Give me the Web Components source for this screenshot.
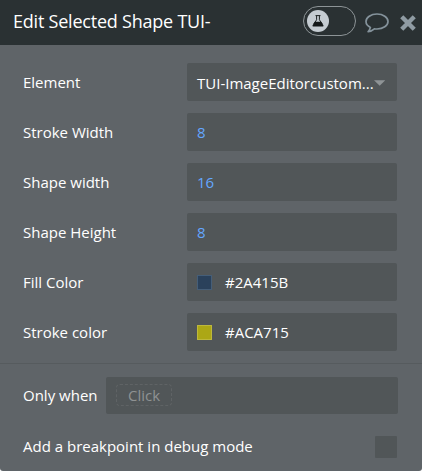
<!DOCTYPE html>
<html lang="en">
<head>
<meta charset="utf-8">
<title>Edit Selected Shape TUI-</title>
<style>
    body {
        margin: 0;
        background: #fff;
        font-family: "Open Sans", "Noto Sans", sans-serif;
        font-size: 15px;
        color: #fff;
    }
</style>
</head>
<body>
<property-editor>
    <editor-header slot="header">Edit Selected Shape TUI-</editor-header>
    <property-row label="Element"><select-field>TUI-ImageEditorcustom...</select-field></property-row>
    <property-row label="Stroke Width"><number-field>8</number-field></property-row>
    <property-row label="Shape width"><number-field>16</number-field></property-row>
    <property-row label="Shape Height"><number-field>8</number-field></property-row>
    <property-row label="Fill Color"><color-field value="#2A415B" edge="#455e78"></color-field></property-row>
    <property-row label="Stroke color"><color-field value="#ACA715" edge="#bdb83c"></color-field></property-row>
    <condition-row slot="footer" label="Only when">Click</condition-row>
    <check-row slot="footer">Add a breakpoint in debug mode</check-row>
</property-editor>

<script>
class PropertyEditor extends HTMLElement {
    constructor() {
        super();
        this.attachShadow({ mode: 'open' });
        this.shadowRoot.innerHTML = `
            <style>
                :host {
                    display: flex;
                    flex-direction: column;
                    box-sizing: border-box;
                    width: 422px;
                    height: 471px;
                    background: #5f6468;
                    border-radius: 0 0 3px 3px;
                    overflow: hidden;
                }

                .rows {
                    display: flex;
                    flex-direction: column;
                    gap: 12px;
                    padding: 18px 25px 12px 23px;
                }

                .footer {
                    display: flex;
                    flex-direction: column;
                    gap: 22px;
                    padding: 13px 24px 0 23px;
                    border-top: 1px solid #565b5e;
                }
            </style>
            <slot name="header"></slot>
            <div class="rows"><slot></slot></div>
            <div class="footer"><slot name="footer"></slot></div>
        `;
    }
}

class EditorHeader extends HTMLElement {
    constructor() {
        super();
        this.attachShadow({ mode: 'open' });
        this.shadowRoot.innerHTML = `
            <style>
                :host {
                    display: flex;
                    align-items: center;
                    box-sizing: border-box;
                    height: 45px;
                    padding: 0 6px 3px 13px;
                    background: #2a3133;
                    font-size: 18px;
                }

                .title {
                    flex: 1;
                    white-space: nowrap;
                    letter-spacing: -0.22px;
                }

                .toggle {
                    display: flex;
                    align-items: center;
                    box-sizing: border-box;
                    width: 53px;
                    height: 30px;
                    padding: 0 3px;
                    border: 1px solid #8d9497;
                    border-radius: 15px;
                }

                .knob {
                    display: flex;
                    align-items: center;
                    justify-content: center;
                    width: 22px;
                    height: 22px;
                    border-radius: 50%;
                    background: #c5ccd2;
                }

                svg {
                    display: block;
                }

                .comment {
                    margin-top: 4px;
                    margin-left: 9px;
                }

                .close {
                    margin-top: 3px;
                    margin-left: 11px;
                }
            </style>
            <span class="title"><slot></slot></span>
            <div class="toggle">
                <div class="knob">
                    <svg width="12" height="12" viewBox="0 0 12 12">
                        <path d="M3.500 .6h5M4.600 .8v4L1.600 9.200M7.400 .8v4l3 4.400" fill="none" stroke="#1d2324" stroke-width="1"/>
                        <path d="M2.800 6.800h6.400l2.300 3.700q.3 1.100-.8 1.100H1.300q-1.100 0-.8-1.100z" fill="#15191a"/>
                    </svg>
                </div>
            </div>
            <svg class="comment" width="24" height="22" viewBox="0 0 24 22">
                <path d="M12 2C5.900 2 1 5.300 1 9.500c0 2.500 1.700 4.600 4.400 5.900-.3 1.700-1.100 2.900-2.300 4.300 2.500-.3 4.700-1.500 6.300-2.900 .8.150 1.700.2 2.600.2 6.100 0 11-3.300 11-7.500S18.100 2 12 2z" fill="none" stroke="#84929b" stroke-width="1.700" stroke-linejoin="round"/>
            </svg>
            <svg class="close" width="16" height="16" viewBox="0 0 16 16">
                <path d="M3.300 3.300l9.400 9.400M12.700 3.300l-9.400 9.400" stroke="#8f9ba3" stroke-width="4.400" stroke-linecap="square"/>
            </svg>
        `;
    }
}

class PropertyRow extends HTMLElement {
    constructor() {
        super();
        this.attachShadow({ mode: 'open' });
        this.shadowRoot.innerHTML = `
            <style>
                :host {
                    display: grid;
                    grid-template-columns: 164px 210px;
                    align-items: center;
                    height: 38px;
                }
            </style>
            <span class="label"></span>
            <slot></slot>
        `;
        this.shadowRoot.querySelector('.label').textContent = this.getAttribute('label');
    }
}

// Shared box of the fields in the right column
const fieldStyle = `
    :host {
        display: flex;
        align-items: center;
        box-sizing: border-box;
        height: 38px;
        padding: 0 10px;
        border-radius: 2px;
        background: #515658;
        white-space: nowrap;
    }
`;

class SelectField extends HTMLElement {
    constructor() {
        super();
        this.attachShadow({ mode: 'open' });
        this.shadowRoot.innerHTML = `
            <style>
                ${fieldStyle}
                .value {
                    flex: 1;
                    padding-top: 2px;
                }

                svg {
                    display: block;
                    margin-top: 2px;
                    margin-right: 2px;
                }
            </style>
            <span class="value"><slot></slot></span>
            <svg width="12" height="6" viewBox="0 0 12 6"><path d="M0 0h12L6 6z" fill="#8f9496"/></svg>
        `;
    }
}

class NumberField extends HTMLElement {
    constructor() {
        super();
        this.attachShadow({ mode: 'open' });
        this.shadowRoot.innerHTML = `
            <style>
                ${fieldStyle}
                :host {
                    color: #64a7ff;
                }
            </style>
            <slot></slot>
        `;
    }
}

class ColorField extends HTMLElement {
    constructor() {
        super();
        this.attachShadow({ mode: 'open' });
        this.shadowRoot.innerHTML = `
            <style>
                ${fieldStyle}
                :host {
                    gap: 13px;
                }

                .swatch {
                    box-sizing: border-box;
                    width: 15px;
                    height: 15px;
                    border: 1px solid;
                }
            </style>
            <span class="swatch"></span>
            <span class="value"></span>
        `;
        const swatch = this.shadowRoot.querySelector('.swatch');
        swatch.style.backgroundColor = this.getAttribute('value');
        swatch.style.borderColor = this.getAttribute('edge');
        this.shadowRoot.querySelector('.value').textContent = this.getAttribute('value');
    }
}

class ConditionRow extends HTMLElement {
    constructor() {
        super();
        this.attachShadow({ mode: 'open' });
        this.shadowRoot.innerHTML = `
            <style>
                :host {
                    display: grid;
                    grid-template-columns: 83px 1fr;
                    align-items: center;
                    height: 37px;
                    white-space: nowrap;
                }

                .label {
                    padding-bottom: 2px;
                }

                .box {
                    display: flex;
                    align-items: center;
                    box-sizing: border-box;
                    height: 37px;
                    padding: 0 10px 1px;
                    border-radius: 2px;
                    background: #515658;
                }

                .chip {
                    box-sizing: border-box;
                    width: 56px;
                    height: 22px;
                    border: 1px dashed #5f6365;
                    border-radius: 4px;
                    line-height: 20px;
                    text-align: center;
                    color: #8f9293;
                }
            </style>
            <span class="label"></span>
            <div class="box"><span class="chip"><slot></slot></span></div>
        `;
        this.shadowRoot.querySelector('.label').textContent = this.getAttribute('label');
    }
}

class CheckRow extends HTMLElement {
    constructor() {
        super();
        this.attachShadow({ mode: 'open' });
        this.shadowRoot.innerHTML = `
            <style>
                :host {
                    display: flex;
                    align-items: center;
                    justify-content: space-between;
                    height: 22px;
                    padding-right: 1px;
                }

                .text {
                    padding-bottom: 3px;
                }

                .check {
                    width: 22px;
                    height: 22px;
                    border-radius: 1px;
                    background: #515658;
                }
            </style>
            <span class="text"><slot></slot></span>
            <span class="check"></span>
        `;
    }
}

customElements.define('property-editor', PropertyEditor);
customElements.define('editor-header', EditorHeader);
customElements.define('property-row', PropertyRow);
customElements.define('select-field', SelectField);
customElements.define('number-field', NumberField);
customElements.define('color-field', ColorField);
customElements.define('condition-row', ConditionRow);
customElements.define('check-row', CheckRow);
</script>
</body>
</html>
